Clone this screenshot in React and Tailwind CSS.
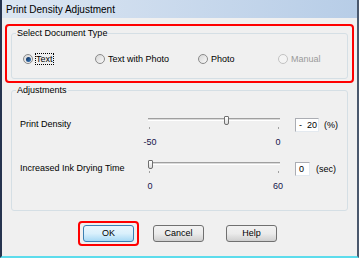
function Radio({ checked, disabled, focus, label, className }) {
  return (
    <div className={`flex items-center h-[12px] ${className}`}>
      <span
        className={`w-[10px] h-[10px] shrink-0 rounded-full border flex items-center justify-center ${
          disabled ? "border-[#c2c2c2] bg-[#f4f4f4]" : "border-[#8a8a8a] bg-linear-to-br from-[#d6d6d6] to-[#fafafa]"
        }`}
      >
        {checked && <span className="w-[5px] h-[5px] rounded-full bg-linear-to-br from-[#0b2a55] to-[#3b7fc4]" />}
      </span>
      {focus ? (
        <span className="ml-[2px] border border-dotted border-black px-[0px] leading-[10px]">{label}</span>
      ) : (
        <span className={`ml-[3px] leading-[12px] ${disabled ? "text-[#9a9a9a]" : ""}`}>{label}</span>
      )}
    </div>
  );
}

function Slider({ thumb, left, right }) {
  return (
    <div className="w-[132px] relative">
      <div className="mt-[4px] h-[3px] w-[132px] border-t border-t-[#9f9f9f] bg-[#dadada] border-b border-b-white" />
      <div className={`absolute top-[2px] w-[5px] h-[9px] border border-[#6f6f6f] rounded-b-[2px] rounded-t-[1px] bg-linear-to-b from-white to-[#dcdcdc] ${thumb}`} />
      <div className="flex justify-between px-[1px] mt-[6px]">
        <span className="w-px h-[2px] bg-[#a0a0a0]" />
        <span className="w-px h-[2px] bg-[#a0a0a0]" />
      </div>
      <div className="flex justify-between -mx-[8px] mt-[8px] leading-[11px] text-[#14144a]">
        <span className="w-[20px] text-center">{left}</span>
        <span className="w-[20px] text-center">{right}</span>
      </div>
    </div>
  );
}

function Button({ children, primary }) {
  return (
    <div
      className={`w-[51px] h-[17px] rounded-[3px] border text-center leading-[15px] ${
        primary
          ? "border-[#3c7fb1] bg-linear-to-b from-[#eaf6fd] via-[#d9f0fc] to-[#a7d9f5]"
          : "border-[#707070] bg-linear-to-b from-[#f2f2f2] via-[#ebebeb] to-[#cfcfcf]"
      }`}
    >
      {children}
    </div>
  );
}

export default function App() {
  return (
    <div className="w-[359px] h-[258px] bg-[#f0f0f0] font-['Liberation_Sans',Arial,sans-serif] text-[9px] text-black border-l-2 border-l-[#26344f] border-r-2 border-r-[#4a586d] border-b-2 border-b-[#5cdcec] flex flex-col overflow-hidden">
      {/* title bar */}
      <div className="h-[18px] shrink-0 bg-linear-to-r from-[#dce6f2] to-[#b7cde7] pl-[4px] text-[10px] leading-[19px]">
        Print Density Adjustment
      </div>

      {/* Select Document Type */}
      <div className="ml-[3px] mt-[6px] w-[349px] h-[59px] shrink-0 border-2 border-[#ff0000] rounded-[4px] px-[4px] pt-[2px]">
        <fieldset className="h-[51px] border border-[#d5dfe5] rounded-[3px]">
          <legend className="ml-[4px] px-[1px] leading-[11px]">Select Document Type</legend>
          <div className="flex mt-[14px] pl-[11px]">
            <Radio checked focus label="Text" className="w-[72px]" />
            <Radio label="Text with Photo" className="w-[103px]" />
            <Radio label="Photo" className="w-[80px]" />
            <Radio disabled label="Manual" />
          </div>
        </fieldset>
      </div>

      {/* Adjustments */}
      <fieldset className="ml-[9px] mt-[2px] w-[337px] h-[126px] shrink-0 border border-[#d5dfe5] rounded-[3px]">
        <legend className="ml-[4px] px-[1px] leading-[11px]">Adjustments</legend>
        <div className="mt-[18px] flex h-[44px]">
          <div className="w-[136px] pl-[8px] pt-[5px] leading-[11px]">Print Density</div>
          <Slider thumb="left-[76px]" left="-50" right="0" />
          <div className="ml-[15px] mt-[4px] w-[24px] h-[14px] bg-white border border-[#abadb3] border-r-[#e3e9ef] border-b-[#e3e9ef] leading-[12px] pl-[3px] whitespace-pre">
            -  20
          </div>
          <div className="ml-[5px] mt-[4px] leading-[14px]">(%)</div>
        </div>
        <div className="flex h-[44px]">
          <div className="w-[136px] pl-[8px] pt-[5px] leading-[11px]">Increased Ink Drying Time</div>
          <Slider thumb="left-[0px]" left="0" right="60" />
          <div className="ml-[15px] mt-[4px] w-[15px] h-[14px] bg-white border border-[#abadb3] border-r-[#e3e9ef] border-b-[#e3e9ef] leading-[12px] pl-[3px]">
            0
          </div>
          <div className="ml-[6px] mt-[4px] leading-[14px]">(sec)</div>
        </div>
      </fieldset>

      {/* buttons */}
      <div className="flex items-start ml-[76px] mt-[10px]">
        <div className="border-2 border-[#ff0000] rounded-[4px] px-[3px] py-[2px]">
          <Button primary>OK</Button>
        </div>
        <div className="ml-[14px] mt-[4px]">
          <Button>Cancel</Button>
        </div>
        <div className="ml-[22px] mt-[4px]">
          <Button>Help</Button>
        </div>
      </div>
    </div>
  );
}
